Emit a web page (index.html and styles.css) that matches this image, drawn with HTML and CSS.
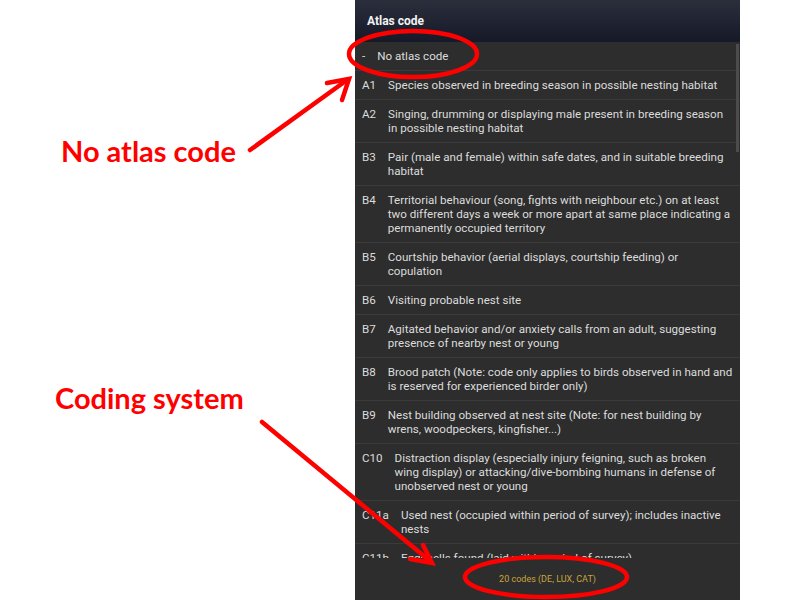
FILE: index.html
```html
<!DOCTYPE html>
<html lang="en">
<head>
    <meta charset="UTF-8">
    <meta name="viewport" content="width=device-width, initial-scale=1.0">
    <title>Atlas code</title>
    <link rel="stylesheet" href="styles.css">
</head>
<body>
    <div class="slide">
        <div class="labels">
            <div class="label label-first">No atlas code</div>
            <div class="label label-second">Coding system</div>
        </div>

        <div class="phone">
            <div class="header">Atlas code</div>
            <div class="list">
                <div class="row"><span class="code">-</span><span class="desc">No atlas code</span></div>
                <div class="row"><span class="code">A1</span><span class="desc">Species observed in breeding season in possible nesting habitat</span></div>
                <div class="row"><span class="code">A2</span><span class="desc">Singing, drumming or displaying male present in breeding season<br>in possible nesting habitat</span></div>
                <div class="row"><span class="code">B3</span><span class="desc">Pair (male and female) within safe dates, and in suitable breeding<br>habitat</span></div>
                <div class="row"><span class="code">B4</span><span class="desc">Territorial behaviour (song, fights with neighbour etc.) on at least<br>two different days a week or more apart at same place indicating a<br>permanently occupied territory</span></div>
                <div class="row"><span class="code">B5</span><span class="desc">Courtship behavior (aerial displays, courtship feeding) or<br>copulation</span></div>
                <div class="row"><span class="code">B6</span><span class="desc">Visiting probable nest site</span></div>
                <div class="row"><span class="code">B7</span><span class="desc">Agitated behavior and/or anxiety calls from an adult, suggesting<br>presence of nearby nest or young</span></div>
                <div class="row"><span class="code">B8</span><span class="desc">Brood patch (Note: code only applies to birds observed in hand and<br>is reserved for experienced birder only)</span></div>
                <div class="row"><span class="code">B9</span><span class="desc">Nest building observed at nest site (Note: for nest building by<br>wrens, woodpeckers, kingfisher...)</span></div>
                <div class="row"><span class="code">C10</span><span class="desc">Distraction display (especially injury feigning, such as broken<br>wing display) or attacking/dive-bombing humans in defense of<br>unobserved nest or young</span></div>
                <div class="row"><span class="code">C11a</span><span class="desc">Used nest (occupied within period of survey); includes inactive<br>nests</span></div>
                <div class="row"><span class="code">C11b</span><span class="desc">Eggshells found (laid within period of survey)</span></div>
                <div class="scroll-thumb"></div>
            </div>
            <div class="footer">20 codes (DE, LUX, CAT)</div>
        </div>
    </div>

    <!-- red annotations drawn over the screenshot -->
    <svg class="marks" width="800" height="600" viewBox="0 0 800 600">
        <g fill="none" stroke="#ff0000" stroke-width="4.5" stroke-linecap="round" stroke-linejoin="miter">
            <ellipse cx="413" cy="54" rx="64" ry="23"/>
            <ellipse cx="546" cy="577" rx="81" ry="20"/>
            <line x1="250" y1="150" x2="347" y2="80"/>
            <polyline points="327,83 349,79 342,100"/>
            <line x1="262" y1="422" x2="430" y2="561"/>
            <polyline points="410,559 432,563 423,545"/>
        </g>
    </svg>
</body>
</html>
```

FILE: styles.css
```css
body {
    margin: 0;
    background-color: #fff;
    font-family: Roboto, "Liberation Sans", sans-serif;
}
.slide {
    position: relative;
    display: flex;
    width: 800px;
    height: 600px;
}
.labels {
    width: 355px;
    display: flex;
    flex-direction: column;
    padding: 136px 0 0 61px;
    box-sizing: border-box;
}
.label {
    font-family: Lato, "Open Sans", sans-serif;
    font-weight: 700;
    font-size: 29px;
    line-height: 29px;
    color: #ff0000;
}
.label-second {
    margin-left: -6px;
    margin-top: 218px;
}
.phone {
    width: 385px;
    height: 600px;
    display: flex;
    flex-direction: column;
    background-color: #2d2d2d;
}
.header {
    height: 42px;
    flex: none;
    display: flex;
    align-items: center;
    padding-left: 12px;
    font-size: 12px;
    font-weight: 700;
    color: #f2f2f2;
    background: linear-gradient(to bottom, #2b2e3b, #151928);
}
.list {
    position: relative;
    flex: 1;
    overflow: hidden;
}
.row {
    display: flex;
    gap: 12px;
    padding: 7px 4px 7px 7px;
    font-size: 11.6px;
    line-height: 14px;
    color: #dcdcdc;
    border-bottom: 1px solid #3a3a3a;
}
.code {
    flex: none;
}
.desc {
    white-space: nowrap;
}
.scroll-thumb {
    position: absolute;
    top: 2px;
    right: 1px;
    width: 3px;
    height: 108px;
    background-color: #4c4c4c;
}
.footer {
    height: 42px;
    flex: none;
    display: flex;
    align-items: center;
    justify-content: center;
    font-size: 9px;
    color: #c9a43c;
}
.marks {
    position: absolute;
    top: 0;
    left: 0;
    pointer-events: none;
}
```
